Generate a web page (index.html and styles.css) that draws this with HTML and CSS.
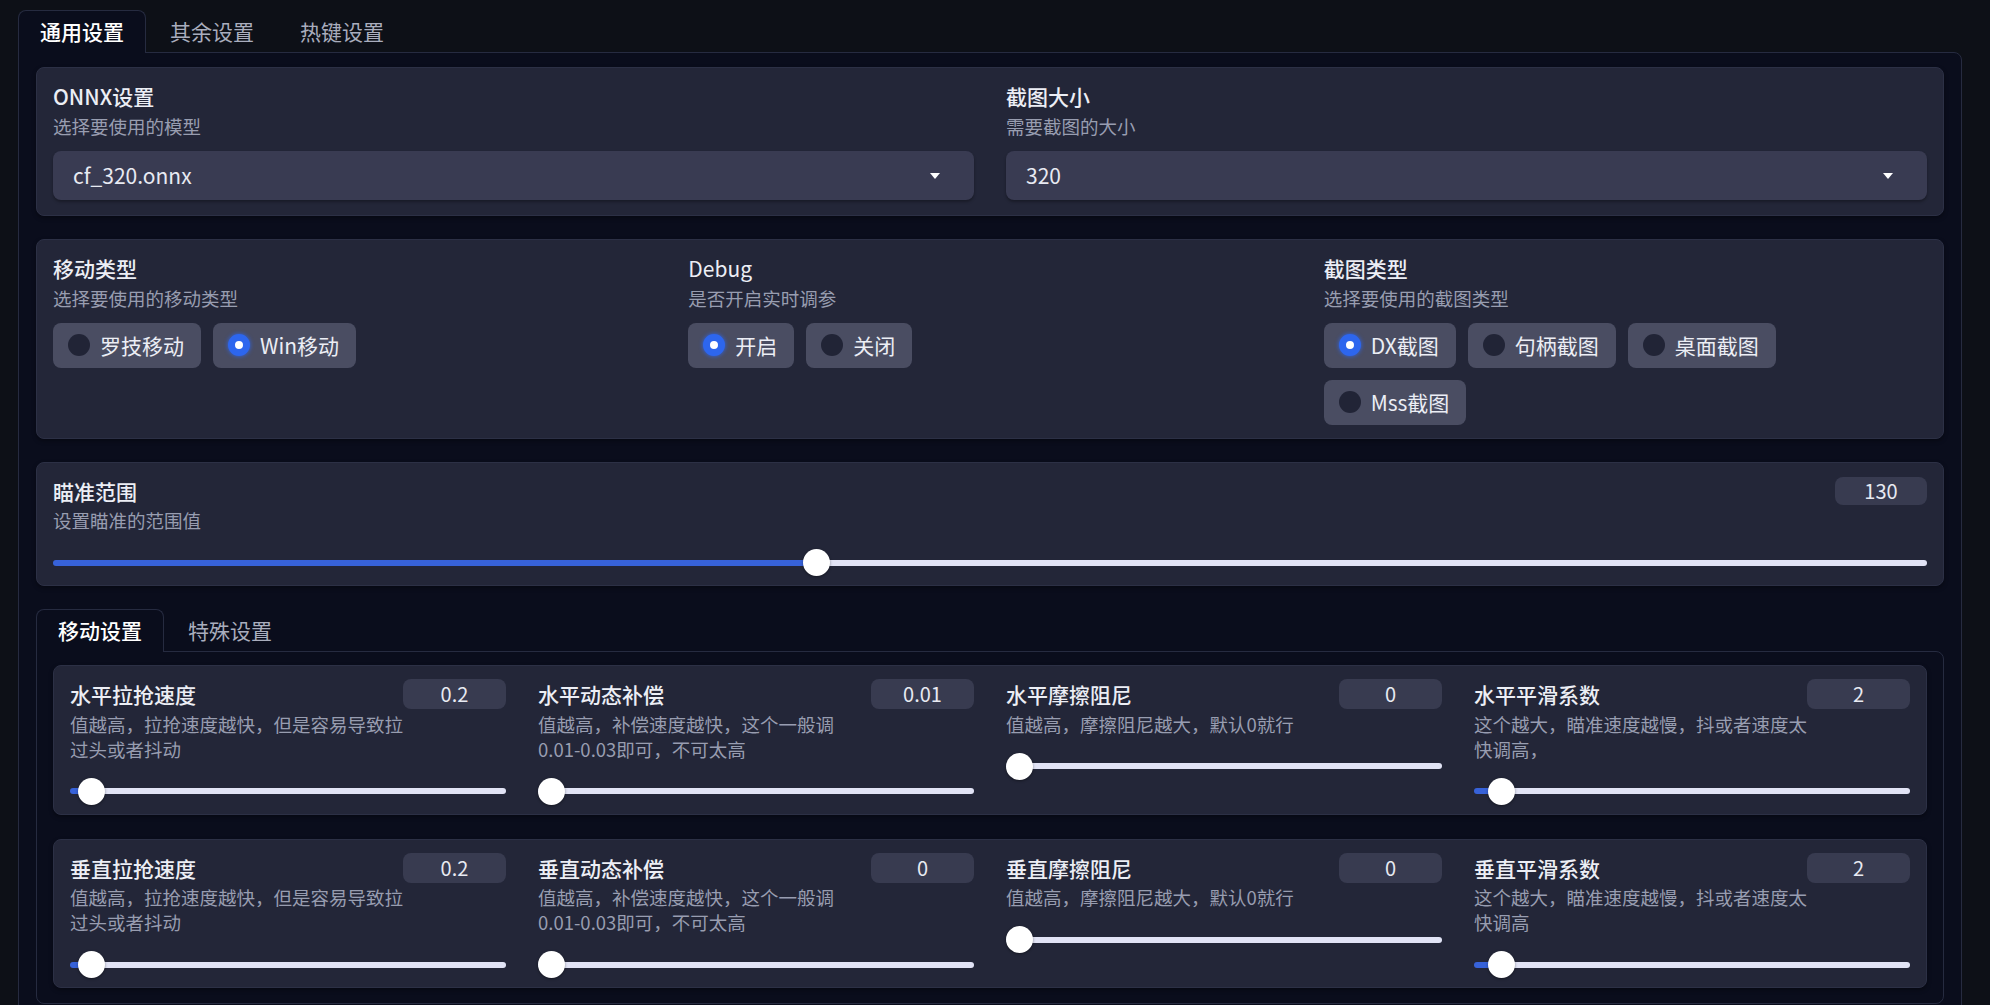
FILE: index.html
```html
<!DOCTYPE html>
<html lang="zh-CN">
<head>
    <meta charset="UTF-8">
    <meta name="viewport" content="width=device-width, initial-scale=1.0">
    <title>通用设置</title>
    <link rel="stylesheet" href="styles.css">
</head>
<body>
    <div class="page">
        <div class="tab-bar">
            <div class="tab active">通用设置</div>
            <div class="tab">其余设置</div>
            <div class="tab">热键设置</div>
        </div>

        <div class="tab-content">
            <!-- 模型 / 截图大小 -->
            <div class="card cols-2">
                <div class="field">
                    <div class="field-title">ONNX设置</div>
                    <div class="field-desc">选择要使用的模型</div>
                    <div class="select">cf_320.onnx<span class="arrow"></span></div>
                </div>
                <div class="field">
                    <div class="field-title">截图大小</div>
                    <div class="field-desc">需要截图的大小</div>
                    <div class="select">320<span class="arrow"></span></div>
                </div>
            </div>

            <!-- 单选项 -->
            <div class="card cols-3 card-radio">
                <div class="field">
                    <div class="field-title">移动类型</div>
                    <div class="field-desc">选择要使用的移动类型</div>
                    <div class="radio-group">
                        <label class="radio"><span class="dot"></span>罗技移动</label>
                        <label class="radio"><span class="dot on"></span>Win移动</label>
                    </div>
                </div>
                <div class="field">
                    <div class="field-title plain">Debug</div>
                    <div class="field-desc">是否开启实时调参</div>
                    <div class="radio-group">
                        <label class="radio"><span class="dot on"></span>开启</label>
                        <label class="radio"><span class="dot"></span>关闭</label>
                    </div>
                </div>
                <div class="field">
                    <div class="field-title">截图类型</div>
                    <div class="field-desc">选择要使用的截图类型</div>
                    <div class="radio-group">
                        <label class="radio"><span class="dot on"></span>DX截图</label>
                        <label class="radio"><span class="dot"></span>句柄截图</label>
                        <label class="radio"><span class="dot"></span>桌面截图</label>
                        <label class="radio"><span class="dot"></span>Mss截图</label>
                    </div>
                </div>
            </div>

            <!-- 瞄准范围 -->
            <div class="card card-slider">
                <div class="field">
                    <div class="field-head">
                        <div class="field-title">瞄准范围</div>
                        <div class="value small">130</div>
                    </div>
                    <div class="field-desc">设置瞄准的范围值</div>
                    <input type="range" class="slider" min="0" max="320" value="130" style="--p:0.406">
                </div>
            </div>

            <div class="sub">
                <div class="tab-bar">
                    <div class="tab active">移动设置</div>
                    <div class="tab">特殊设置</div>
                </div>
                <div class="tab-content inner">
                    <div class="card cols-4 card-slider">
                        <div class="field">
                            <div class="field-head">
                                <div class="field-title">水平拉抢速度</div>
                                <div class="value">0.2</div>
                            </div>
                            <div class="field-desc narrow">值越高，拉抢速度越快，但是容易导致拉过头或者抖动</div>
                            <input type="range" class="slider" min="0" max="10" step="0.01" value="0.2" style="--p:0.02">
                        </div>
                        <div class="field">
                            <div class="field-head">
                                <div class="field-title">水平动态补偿</div>
                                <div class="value">0.01</div>
                            </div>
                            <div class="field-desc narrow">值越高，补偿速度越快，这个一般调<span class="nw">0.01-0.03</span>即可，不可太高</div>
                            <input type="range" class="slider" min="0" max="10" step="0.01" value="0.01" style="--p:0.001">
                        </div>
                        <div class="field">
                            <div class="field-head">
                                <div class="field-title">水平摩擦阻尼</div>
                                <div class="value">0</div>
                            </div>
                            <div class="field-desc narrow">值越高，摩擦阻尼越大，默认0就行</div>
                            <input type="range" class="slider" min="0" max="10" value="0" style="--p:0">
                        </div>
                        <div class="field">
                            <div class="field-head">
                                <div class="field-title">水平平滑系数</div>
                                <div class="value">2</div>
                            </div>
                            <div class="field-desc narrow">这个越大，瞄准速度越慢，抖或者速度太快调高，</div>
                            <input type="range" class="slider" min="1" max="30" value="2" style="--p:0.035">
                        </div>
                    </div>

                    <div class="card cols-4 card-slider">
                        <div class="field">
                            <div class="field-head">
                                <div class="field-title">垂直拉抢速度</div>
                                <div class="value">0.2</div>
                            </div>
                            <div class="field-desc narrow">值越高，拉抢速度越快，但是容易导致拉过头或者抖动</div>
                            <input type="range" class="slider" min="0" max="10" step="0.01" value="0.2" style="--p:0.02">
                        </div>
                        <div class="field">
                            <div class="field-head">
                                <div class="field-title">垂直动态补偿</div>
                                <div class="value">0</div>
                            </div>
                            <div class="field-desc narrow">值越高，补偿速度越快，这个一般调<span class="nw">0.01-0.03</span>即可，不可太高</div>
                            <input type="range" class="slider" min="0" max="10" step="0.01" value="0" style="--p:0">
                        </div>
                        <div class="field">
                            <div class="field-head">
                                <div class="field-title">垂直摩擦阻尼</div>
                                <div class="value">0</div>
                            </div>
                            <div class="field-desc narrow">值越高，摩擦阻尼越大，默认0就行</div>
                            <input type="range" class="slider" min="0" max="10" value="0" style="--p:0">
                        </div>
                        <div class="field">
                            <div class="field-head">
                                <div class="field-title">垂直平滑系数</div>
                                <div class="value">2</div>
                            </div>
                            <div class="field-desc narrow">这个越大，瞄准速度越慢，抖或者速度太快调高</div>
                            <input type="range" class="slider" min="1" max="30" value="2" style="--p:0.035">
                        </div>
                    </div>
                </div>
            </div>
        </div>
    </div>
</body>
</html>
```

FILE: styles.css
```css
html, body {
    height: 100%;
    overflow: hidden;
}

body {
    margin: 0;
    background: #0d1017;
    color: #e6e8f0;
    font-family: "Noto Sans CJK SC", "Noto Sans", sans-serif;
}

.page {
    padding: 10px 28px 0 18px;
}

/* tabs */
.tab-bar {
    display: flex;
    gap: 2px;
}

.tab {
    height: 42px;
    line-height: 41px;
    padding: 0 21px;
    font-size: 21px;
    color: #a9adbd;
    border: 1px solid transparent;
    border-bottom: none;
    border-radius: 8px 8px 0 0;
    margin-bottom: -1px;
    position: relative;
}

.tab.active {
    color: #ffffff;
    font-weight: 500;
    background: #0a0d1c;
    border-color: #262b40;
}

.tab-content {
    display: flex;
    flex-direction: column;
    gap: 23px;
    background: #0a0d1c;
    border: 1px solid #262b40;
    border-radius: 0 8px 8px 8px;
    padding: 14px 17px 15px 17px;
}

.tab-content.inner {
    gap: 24px;
    padding: 13px 16px 15px 16px;
}

/* cards */
.card {
    background: #232638;
    border: 1px solid #2c3045;
    border-radius: 8px;
    padding: 13px 16px 15px 16px;
    box-shadow: 0 2px 4px rgba(0, 0, 0, 0.35);
}

.card-radio {
    padding-bottom: 13px;
}

.card-slider {
    padding-bottom: 9px;
}

.cols-2 {
    display: grid;
    grid-template-columns: 1fr 1fr;
    gap: 32px;
}

.cols-3 {
    display: grid;
    grid-template-columns: 1fr 1fr 1fr;
    gap: 32px;
}

.cols-4 {
    display: grid;
    grid-template-columns: repeat(4, 1fr);
    gap: 32px;
    align-items: start;
}

.field-head {
    display: flex;
    justify-content: space-between;
    align-items: center;
}

.field-title {
    font-size: 21px;
    line-height: 30px;
    font-weight: 500;
    color: #eceef5;
}

.field-title.plain {
    font-weight: 400;
}

.field-desc {
    margin-top: 2.5px;
    font-size: 18.5px;
    line-height: 25px;
    color: #989db0;
}

.field-desc.narrow {
    max-width: 340px;
}

.nw {
    white-space: nowrap;
}

.value {
    width: 103px;
    height: 30px;
    line-height: 30px;
    text-align: center;
    font-size: 20px;
    background: #383b50;
    border-radius: 8px;
    color: #e8eaf2;
}

.value.small {
    width: 92px;
    height: 28px;
    line-height: 28px;
}

/* select */
.select {
    position: relative;
    margin-top: 12.5px;
    height: 49px;
    line-height: 49px;
    padding-left: 20px;
    font-size: 21px;
    background: #393b52;
    border-radius: 8px;
    color: #e8eaf2;
    box-shadow: 0 2px 3px rgba(0, 0, 0, 0.3);
}

.arrow {
    position: absolute;
    right: 34px;
    top: 22px;
    border-left: 5px solid transparent;
    border-right: 5px solid transparent;
    border-top: 6px solid #ffffff;
}

/* radios */
.radio-group {
    display: flex;
    flex-wrap: wrap;
    gap: 12px;
    margin-top: 12px;
    max-width: 480px;
}

.radio {
    display: flex;
    align-items: center;
    gap: 10px;
    height: 45px;
    padding: 0 17px 0 15px;
    font-size: 21px;
    background: #4a4d62;
    border-radius: 8px;
    color: #eceef5;
}

.dot {
    width: 22px;
    height: 22px;
    border-radius: 50%;
    background: #212436;
    box-sizing: border-box;
}

.dot.on {
    background: #ffffff;
    border: 7px solid #2d66ee;
    box-shadow: 0 0 4px #2d66ee;
}

/* sliders */
.slider {
    -webkit-appearance: none;
    appearance: none;
    display: block;
    width: 100%;
    height: 27px;
    margin: 16px 0 0 0;
    background: transparent;
}

.slider::-webkit-slider-runnable-track {
    height: 6px;
    border-radius: 3px;
    background: linear-gradient(to right, #3762d9 calc(var(--p) * (100% - 27px) + 13.5px), #e1e3f5 0);
}

.slider::-webkit-slider-thumb {
    -webkit-appearance: none;
    width: 27px;
    height: 27px;
    margin-top: -10.5px;
    border-radius: 50%;
    background: #ffffff;
    box-shadow: 0 1px 3px rgba(0, 0, 0, 0.4);
}
```
